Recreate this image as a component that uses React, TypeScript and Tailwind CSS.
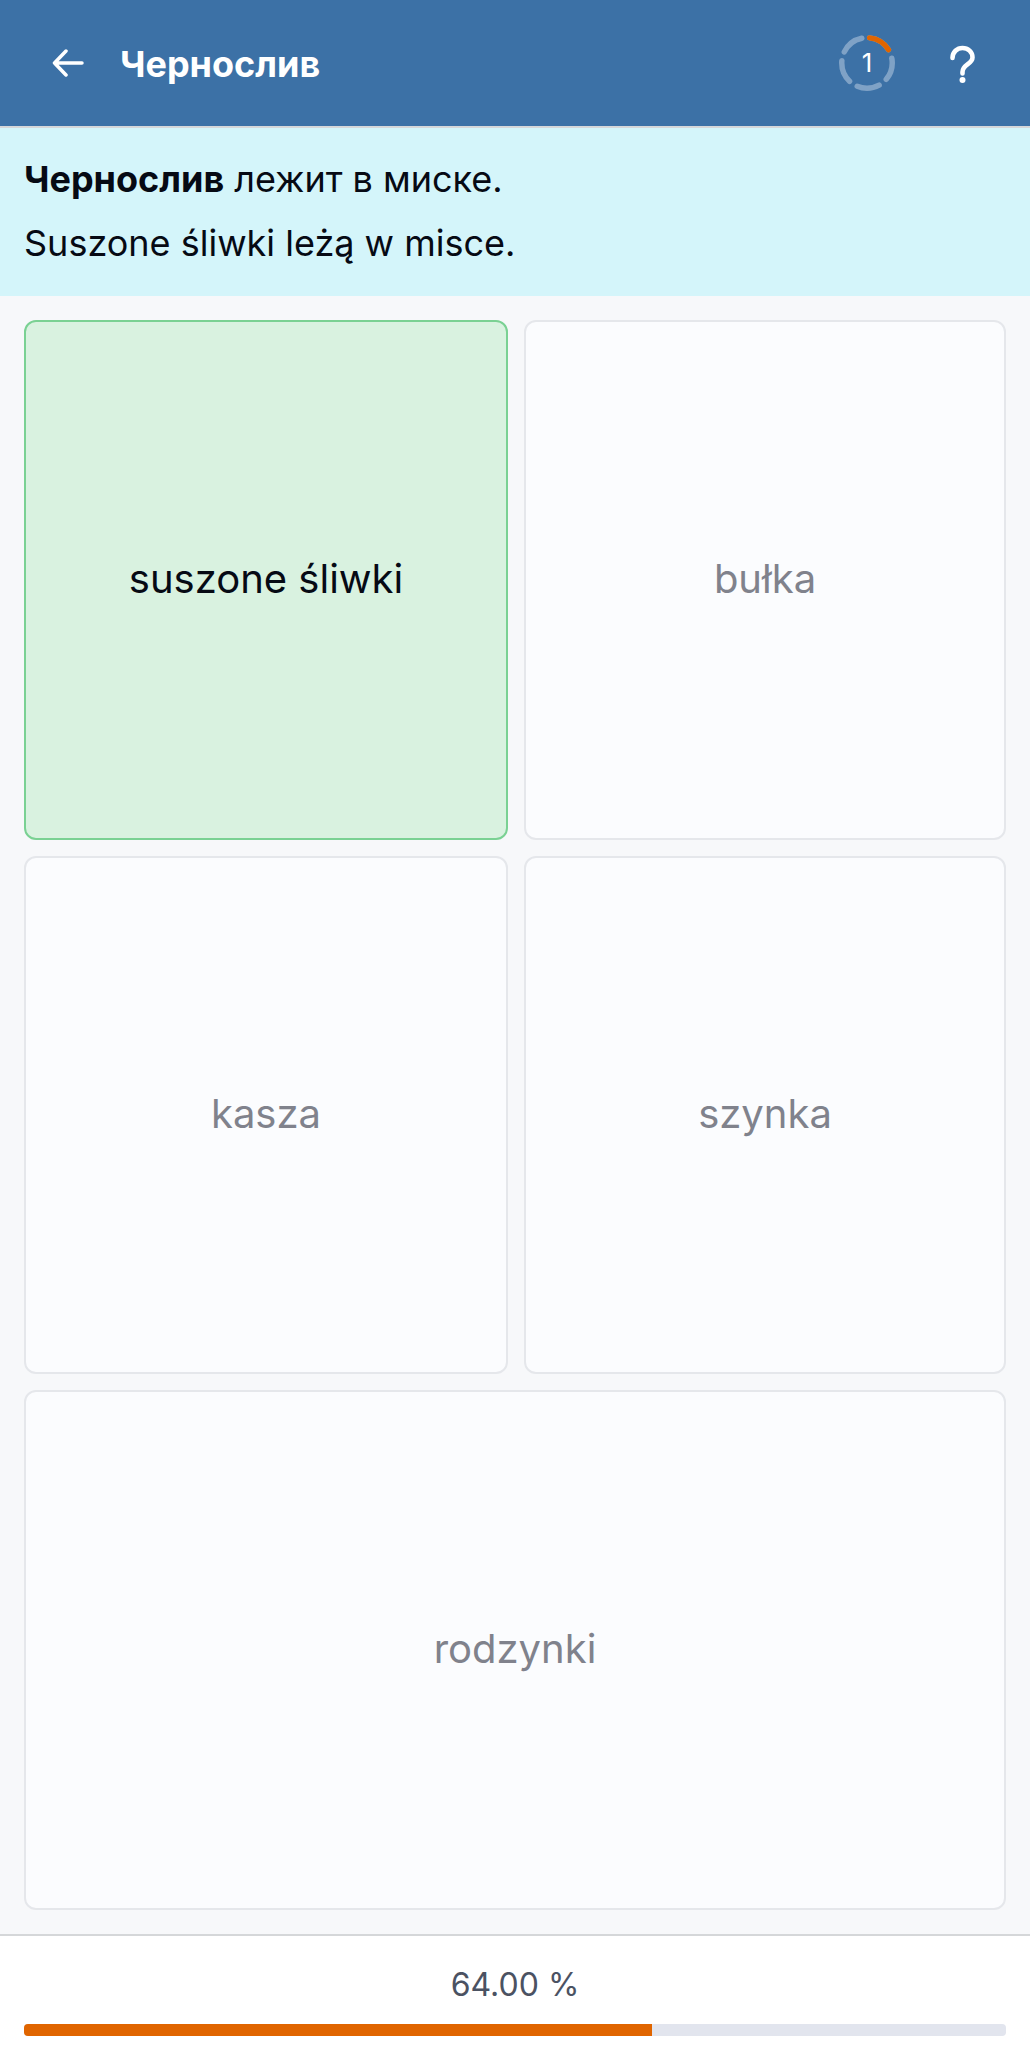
import React from 'react';

const Card = ({ label, active, wide }: { label: string; active?: boolean; wide?: boolean }) => (
  <div
    className={`flex items-center justify-center rounded-[12px] border-2 pb-[3px] text-[40px] ${wide ? 'col-span-2' : ''} ${
      active ? 'border-[#7ad193] bg-[#d9f2e0] text-[#060a14]' : 'border-[#e5e7eb] bg-[#fbfcfe] text-[#80828c]'
    }`}
  >
    {label}
  </div>
);

const Timer = () => (
  <div className="relative flex h-[56px] w-[56px] items-center justify-center">
    <svg className="absolute inset-0 -rotate-90" width="56" height="56" viewBox="0 0 56 56" fill="none" strokeWidth="5.5" strokeLinecap="round">
      <circle cx="28" cy="28" r="25.25" stroke="#7fa2c6" strokeDasharray="22.6 9.13" strokeDashoffset="-2.75" />
      <circle cx="28" cy="28" r="25.25" stroke="#e06500" strokeDasharray="22.6 136" strokeDashoffset="-2.75" />
    </svg>
    <span className="relative text-[26px] leading-none text-white">1</span>
  </div>
);

export default function App() {
  return (
    <div className="flex h-[2060px] flex-col bg-[#f7f8fa] font-['Inter',sans-serif]">
      <header className="flex h-[128px] shrink-0 items-center border-b-2 border-[#d5d7d9] bg-[#3c71a6] pl-[52px] pr-[52px] text-white">
        <svg width="32" height="28" viewBox="0 0 32 28" fill="none" stroke="currentColor" strokeWidth="3.5" strokeLinecap="round" strokeLinejoin="round">
          <path d="M2.5 14H30M14 2L2.5 14L14 26" />
        </svg>
        <span className="ml-[36px] pt-[2px] text-[36px] font-bold">Чернослив</span>
        <div className="ml-auto flex items-center gap-[55px]">
          <Timer />
          <svg width="28" height="40" viewBox="0 0 28 40" fill="none" stroke="white" strokeWidth="4.6" strokeLinecap="round">
            <path d="M2.5 15C2.5 9 7 5 12.5 5C18 5 22.5 9 22.5 14.5C22.5 21 12.5 21.5 12.5 29V30.5" />
            <circle cx="12.5" cy="37" r="3" fill="white" stroke="none" />
          </svg>
        </div>
      </header>

      <section className="h-[168px] shrink-0 bg-[#d4f5fa] px-[24px] pt-[19px] text-[36px] leading-[64px] text-[#060a14]">
        <p>
          <b>Чернослив</b> лежит в миске.
        </p>
        <p>Suszone śliwki leżą w misce.</p>
      </section>

      <main className="grid min-h-0 flex-1 grid-cols-[484px_482px] grid-rows-[520px_518px_520px] gap-x-[16px] gap-y-[16px] px-[24px] pb-[24px] pt-[24px]">
        <Card label="suszone śliwki" active />
        <Card label="bułka" />
        <Card label="kasza" />
        <Card label="szynka" />
        <Card label="rodzynki" wide />
      </main>

      <footer className="h-[126px] shrink-0 border-t-2 border-[#d5d7d9] bg-white px-[24px] pt-[29px]">
        <div className="text-center text-[32px] leading-[40px] text-[#4b5262]">64.00 %</div>
        <div className="mt-[19px] h-[12px] overflow-hidden rounded-[4px] bg-[#e2e5ee]">
          <div className="h-full w-[64%] bg-[#e06500]" />
        </div>
      </footer>
    </div>
  );
}
